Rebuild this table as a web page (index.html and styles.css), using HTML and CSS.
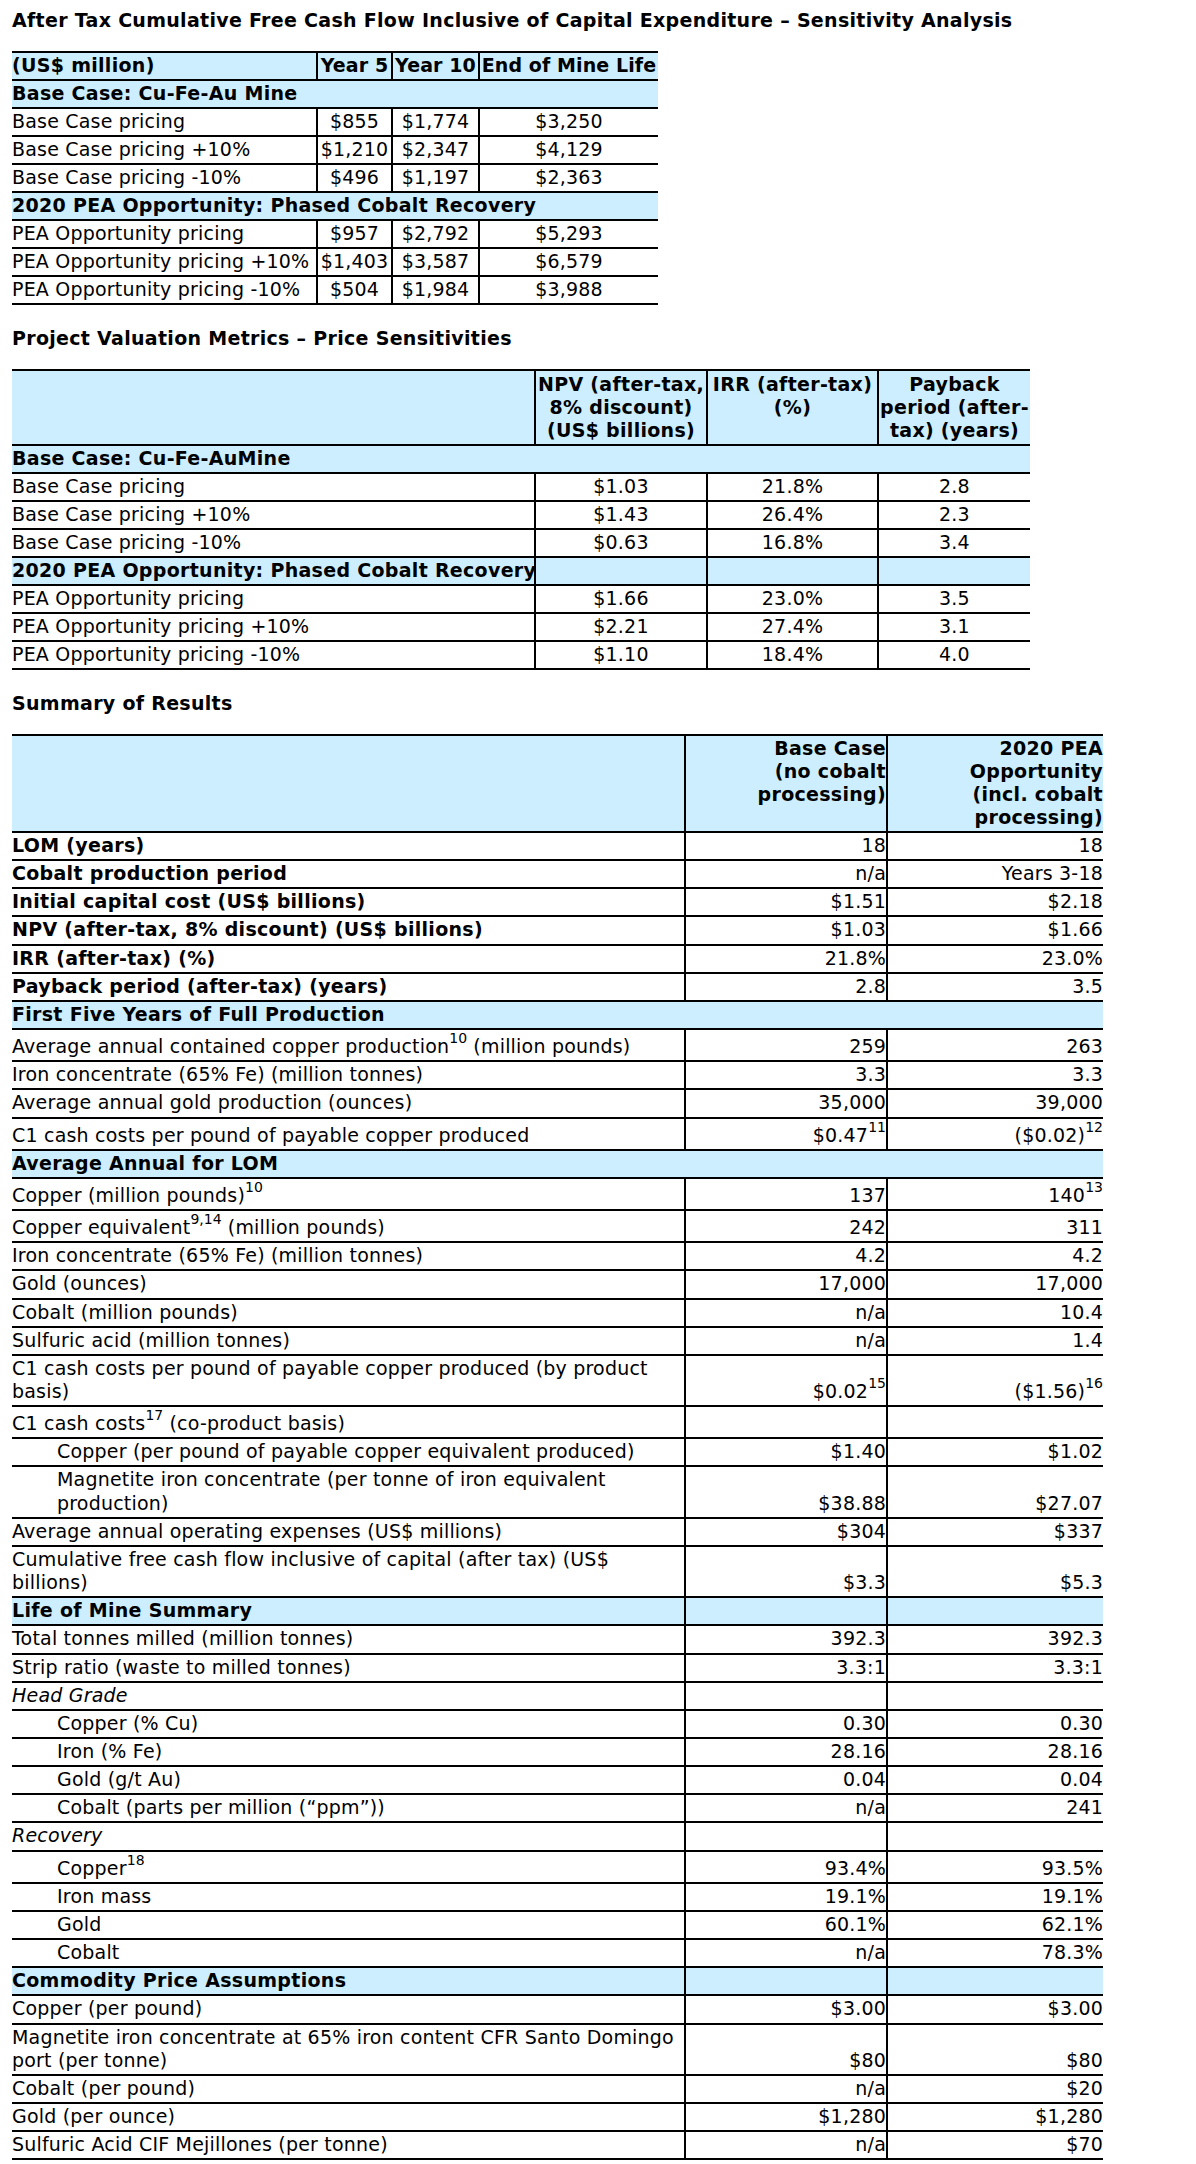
FILE: index.html
```html
<!DOCTYPE html>
<html lang="en">
<head>
<meta charset="utf-8">
<title>Sensitivity Analysis</title>
<link rel="stylesheet" href="styles.css">
</head>
<body>
<main class="page">
  <h2 class="title first">After Tax Cumulative Free Cash Flow Inclusive of Capital Expenditure – Sensitivity Analysis</h2>
  <table class="tbl t1">
    <colgroup><col class="c1a"><col class="c1b"><col class="c1c"><col class="c1d"></colgroup>
    <thead>
      <tr class="hd">
        <th class="lbl">(US$ million)</th><th class="v">Year 5</th><th class="v">Year 10</th><th class="v">End of Mine Life</th>
      </tr>
    </thead>
    <tbody>
      <tr class="sec"><td class="lbl" colspan="4">Base Case: Cu-Fe-Au Mine</td></tr>
      <tr><td class="lbl">Base Case pricing</td><td class="v">$855</td><td class="v">$1,774</td><td class="v">$3,250</td></tr>
      <tr><td class="lbl">Base Case pricing +10%</td><td class="v">$1,210</td><td class="v">$2,347</td><td class="v">$4,129</td></tr>
      <tr><td class="lbl">Base Case pricing -10%</td><td class="v">$496</td><td class="v">$1,197</td><td class="v">$2,363</td></tr>
      <tr class="sec"><td class="lbl" colspan="4">2020 PEA Opportunity: Phased Cobalt Recovery</td></tr>
      <tr><td class="lbl">PEA Opportunity pricing</td><td class="v">$957</td><td class="v">$2,792</td><td class="v">$5,293</td></tr>
      <tr><td class="lbl">PEA Opportunity pricing +10%</td><td class="v">$1,403</td><td class="v">$3,587</td><td class="v">$6,579</td></tr>
      <tr><td class="lbl">PEA Opportunity pricing -10%</td><td class="v">$504</td><td class="v">$1,984</td><td class="v">$3,988</td></tr>
    </tbody>
  </table>

  <h2 class="title">Project Valuation Metrics – Price Sensitivities</h2>
  <table class="tbl t2">
    <colgroup><col class="c2a"><col class="c2b"><col class="c2c"><col class="c2d"></colgroup>
    <thead>
      <tr class="hd">
        <th class="lbl"></th>
        <th class="v">NPV (after-tax,<br>8% discount)<br>(US$ billions)</th>
        <th class="v">IRR (after-tax)<br>(%)</th>
        <th class="v">Payback<br>period (after-<br>tax) (years)</th>
      </tr>
    </thead>
    <tbody>
      <tr class="sec"><td class="lbl" colspan="4">Base Case: Cu-Fe-AuMine</td></tr>
      <tr><td class="lbl">Base Case pricing</td><td class="v">$1.03</td><td class="v">21.8%</td><td class="v">2.8</td></tr>
      <tr><td class="lbl">Base Case pricing +10%</td><td class="v">$1.43</td><td class="v">26.4%</td><td class="v">2.3</td></tr>
      <tr><td class="lbl">Base Case pricing -10%</td><td class="v">$0.63</td><td class="v">16.8%</td><td class="v">3.4</td></tr>
      <tr class="sec"><td class="lbl">2020 PEA Opportunity: Phased Cobalt Recovery</td><td class="v"></td><td class="v"></td><td class="v"></td></tr>
      <tr><td class="lbl">PEA Opportunity pricing</td><td class="v">$1.66</td><td class="v">23.0%</td><td class="v">3.5</td></tr>
      <tr><td class="lbl">PEA Opportunity pricing +10%</td><td class="v">$2.21</td><td class="v">27.4%</td><td class="v">3.1</td></tr>
      <tr><td class="lbl">PEA Opportunity pricing -10%</td><td class="v">$1.10</td><td class="v">18.4%</td><td class="v">4.0</td></tr>
    </tbody>
  </table>

  <h2 class="title">Summary of Results</h2>
  <table class="tbl t3">
    <colgroup><col class="c3a"><col class="c3b"><col class="c3c"></colgroup>
    <thead>
      <tr class="hd">
        <th class="lbl"></th>
        <th class="v">Base Case<br>(no cobalt<br>processing)</th>
        <th class="v">2020 PEA<br>Opportunity<br>(incl. cobalt<br>processing)</th>
      </tr>
    </thead>
    <tbody>
      <tr class="b"><td class="lbl">LOM (years)</td><td class="v">18</td><td class="v">18</td></tr>
      <tr class="b"><td class="lbl">Cobalt production period</td><td class="v">n/a</td><td class="v">Years 3-18</td></tr>
      <tr class="b"><td class="lbl">Initial capital cost (US$ billions)</td><td class="v">$1.51</td><td class="v">$2.18</td></tr>
      <tr class="b"><td class="lbl">NPV (after-tax, 8% discount) (US$ billions)</td><td class="v">$1.03</td><td class="v">$1.66</td></tr>
      <tr class="b"><td class="lbl">IRR (after-tax) (%)</td><td class="v">21.8%</td><td class="v">23.0%</td></tr>
      <tr class="b"><td class="lbl">Payback period (after-tax) (years)</td><td class="v">2.8</td><td class="v">3.5</td></tr>
      <tr class="sec"><td class="lbl" colspan="3">First Five Years of Full Production</td></tr>
      <tr><td class="lbl">Average annual contained copper production<sup>10</sup> (million pounds)</td><td class="v">259</td><td class="v">263</td></tr>
      <tr><td class="lbl">Iron concentrate (65% Fe) (million tonnes)</td><td class="v">3.3</td><td class="v">3.3</td></tr>
      <tr><td class="lbl">Average annual gold production (ounces)</td><td class="v">35,000</td><td class="v">39,000</td></tr>
      <tr><td class="lbl">C1 cash costs per pound of payable copper produced</td><td class="v">$0.47<sup>11</sup></td><td class="v">($0.02)<sup>12</sup></td></tr>
      <tr class="sec"><td class="lbl" colspan="3">Average Annual for LOM</td></tr>
      <tr><td class="lbl">Copper (million pounds)<sup>10</sup></td><td class="v">137</td><td class="v">140<sup>13</sup></td></tr>
      <tr><td class="lbl">Copper equivalent<sup>9,14</sup> (million pounds)</td><td class="v">242</td><td class="v">311</td></tr>
      <tr><td class="lbl">Iron concentrate (65% Fe) (million tonnes)</td><td class="v">4.2</td><td class="v">4.2</td></tr>
      <tr><td class="lbl">Gold (ounces)</td><td class="v">17,000</td><td class="v">17,000</td></tr>
      <tr><td class="lbl">Cobalt (million pounds)</td><td class="v">n/a</td><td class="v">10.4</td></tr>
      <tr><td class="lbl">Sulfuric acid (million tonnes)</td><td class="v">n/a</td><td class="v">1.4</td></tr>
      <tr><td class="lbl">C1 cash costs per pound of payable copper produced (by product<br>basis)</td><td class="v">$0.02<sup>15</sup></td><td class="v">($1.56)<sup>16</sup></td></tr>
      <tr><td class="lbl">C1 cash costs<sup>17</sup> (co-product basis)</td><td class="v"></td><td class="v"></td></tr>
      <tr><td class="lbl ind">Copper (per pound of payable copper equivalent produced)</td><td class="v">$1.40</td><td class="v">$1.02</td></tr>
      <tr><td class="lbl ind">Magnetite iron concentrate (per tonne of iron equivalent<br>production)</td><td class="v">$38.88</td><td class="v">$27.07</td></tr>
      <tr><td class="lbl">Average annual operating expenses (US$ millions)</td><td class="v">$304</td><td class="v">$337</td></tr>
      <tr><td class="lbl">Cumulative free cash flow inclusive of capital (after tax) (US$<br>billions)</td><td class="v">$3.3</td><td class="v">$5.3</td></tr>
      <tr class="sec"><td class="lbl">Life of Mine Summary</td><td class="v"></td><td class="v"></td></tr>
      <tr><td class="lbl">Total tonnes milled (million tonnes)</td><td class="v">392.3</td><td class="v">392.3</td></tr>
      <tr><td class="lbl">Strip ratio (waste to milled tonnes)</td><td class="v">3.3:1</td><td class="v">3.3:1</td></tr>
      <tr><td class="lbl it">Head Grade</td><td class="v"></td><td class="v"></td></tr>
      <tr><td class="lbl ind">Copper (% Cu)</td><td class="v">0.30</td><td class="v">0.30</td></tr>
      <tr><td class="lbl ind">Iron (% Fe)</td><td class="v">28.16</td><td class="v">28.16</td></tr>
      <tr><td class="lbl ind">Gold (g/t Au)</td><td class="v">0.04</td><td class="v">0.04</td></tr>
      <tr><td class="lbl ind">Cobalt (parts per million (“ppm”))</td><td class="v">n/a</td><td class="v">241</td></tr>
      <tr><td class="lbl it">Recovery</td><td class="v"></td><td class="v"></td></tr>
      <tr><td class="lbl ind">Copper<sup>18</sup></td><td class="v">93.4%</td><td class="v">93.5%</td></tr>
      <tr><td class="lbl ind">Iron mass</td><td class="v">19.1%</td><td class="v">19.1%</td></tr>
      <tr><td class="lbl ind">Gold</td><td class="v">60.1%</td><td class="v">62.1%</td></tr>
      <tr><td class="lbl ind">Cobalt</td><td class="v">n/a</td><td class="v">78.3%</td></tr>
      <tr class="sec"><td class="lbl">Commodity Price Assumptions</td><td class="v"></td><td class="v"></td></tr>
      <tr><td class="lbl">Copper (per pound)</td><td class="v">$3.00</td><td class="v">$3.00</td></tr>
      <tr><td class="lbl">Magnetite iron concentrate at 65% iron content CFR Santo Domingo<br>port (per tonne)</td><td class="v">$80</td><td class="v">$80</td></tr>
      <tr><td class="lbl">Cobalt (per pound)</td><td class="v">n/a</td><td class="v">$20</td></tr>
      <tr><td class="lbl">Gold (per ounce)</td><td class="v">$1,280</td><td class="v">$1,280</td></tr>
      <tr><td class="lbl">Sulfuric Acid CIF Mejillones (per tonne)</td><td class="v">n/a</td><td class="v">$70</td></tr>
    </tbody>
  </table>
</main>
</body>
</html>
```
FILE: styles.css
```css
html, body {
  margin: 0;
  padding: 0;
  background: #ffffff;
}

body {
  font-family: "DejaVu Sans", Verdana, sans-serif;
  font-size: 19px;
  line-height: 23px;
  letter-spacing: 0.2px;
  color: #000000;
}

.page {
  padding: 0 0 10px 12px;
}

.title {
  font-size: 19px;
  line-height: 23px;
  font-weight: bold;
  letter-spacing: 0.3px;
  margin: 22px 0 19px 0;
}

.title.first {
  margin-top: 9px;
}

.tbl {
  border-collapse: collapse;
  table-layout: fixed;
  border-top: 2px solid #000;
}

.t1 { width: 646px; }
.c1a { width: 305px; }
.c1b { width: 75px; }
.c1c { width: 87px; }
.c1d { width: 179px; }

.t2 { width: 1018px; }
.c2a { width: 523px; }
.c2b { width: 172px; }
.c2c { width: 171px; }
.c2d { width: 152px; }

.t3 { width: 1091px; }
.c3a { width: 673px; }
.c3b { width: 202px; }
.c3c { width: 216px; }

.tbl th,
.tbl td {
  border-bottom: 2px solid #000;
  padding: 1px 2px 2px 0;
  vertical-align: bottom;
  font-weight: normal;
  white-space: nowrap;
}

.t3 td {
  line-height: 23.15px;
}

.tbl .v {
  border-left: 2px solid #000;
  padding: 1px 1px 2px 1px;
}

.tbl th {
  font-weight: bold;
  vertical-align: top;
  background: #cceeff;
  letter-spacing: 0.3px;
}

.t1 th.lbl { text-align: left; }
.t1 .v, .t2 .v { text-align: center; }

.t1 th.v { padding: 1px 0 2px 0; letter-spacing: 0.1px; }

.t2 th.v { padding-top: 2px; }

.t3 .v {
  text-align: right;
  padding-right: 0;
}

.t3 th {
  padding-top: 2px;
  padding-bottom: 4px;
}

.sec td {
  background: #cceeff;
  font-weight: bold;
  letter-spacing: 0.3px;
}

.b td.lbl {
  font-weight: bold;
  letter-spacing: 0.3px;
}

.ind {
  padding-left: 45px !important;
}

.it {
  font-style: italic;
}

sup {
  font-size: 14px;
  line-height: 15px;
  letter-spacing: 0;
  vertical-align: 10px;
}
```
